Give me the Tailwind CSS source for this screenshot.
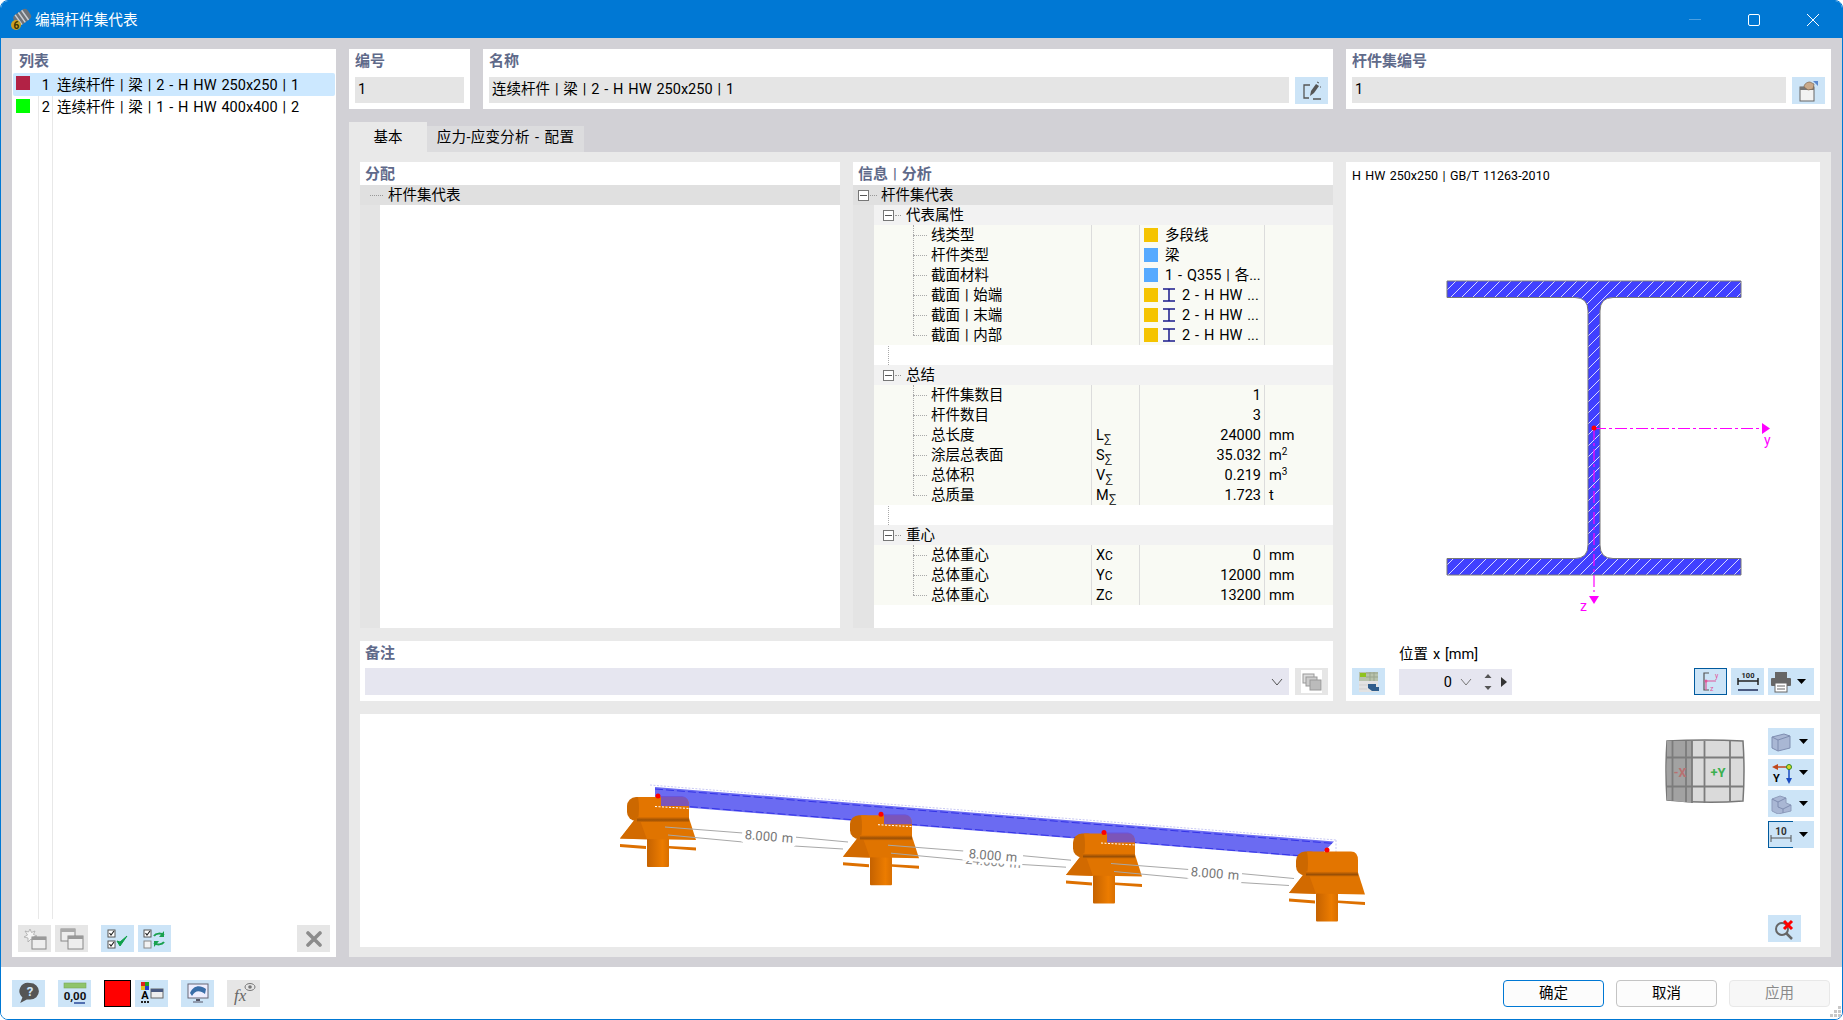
<!DOCTYPE html>
<html lang="zh"><head><meta charset="utf-8"><title>编辑杆件集代表</title>
<script src="https://cdn.jsdelivr.net/npm/@tailwindcss/browser@4"></script></head>
<body class="bg-white">
<div class="w-[1843px] h-[1020px] box-border flex flex-col border border-[#0078d4] rounded-lg overflow-hidden bg-white text-black text-[14.5px] leading-5 [word-spacing:1.3px] font-['Roboto','Noto_Sans_CJK_SC',sans-serif]">
 <!-- title bar -->
 <div class="h-[37px] shrink-0 bg-[#0078d4] flex items-center text-white pl-[8px] relative">
  <svg width="24" height="24" viewBox="0 0 24 24" class="mr-[2px]"><g transform="rotate(-35 12 10)"><rect x="5" y="4" width="17" height="12" rx="4" fill="#6d7278"/><path d="M9 4v12M13 4v12M17 4v12" stroke="#c9ced4" stroke-width="1.500"/></g><circle cx="7" cy="17" r="5" fill="#c9a227"/><text x="4.500" y="21" font-size="10" font-weight="700" fill="#3a3000">6</text></svg>
  <span class="text-[14.67px]">编辑杆件集代表</span>
  <div class="ml-auto flex items-center">
   <span class="w-[59px] flex justify-center"><span class="w-[12px] h-px bg-white/30"></span></span>
   <span class="w-[59px] flex justify-center"><span class="w-[12px] h-[12px] border border-white rounded-[2px]"></span></span>
   <span class="w-[59px] flex justify-center"><svg width="12" height="12" viewBox="0 0 12 12"><path d="M0 0L12 12M12 0L0 12" stroke="#fff" stroke-width="1"/></svg></span>
  </div>
 </div>
 <!-- main -->
 <div class="flex-1 min-h-0 bg-[#d2d1d6] flex gap-[13px] pt-[11px] pl-[11px] pr-[11px] pb-[10px]">
  <!-- list -->
  <div class="w-[324px] bg-white flex flex-col shrink-0">
   <div class="h-[24px] pl-[7px] pt-[2px] font-semibold text-[15px] text-[#5f6a8a]">列表</div>
   <div class="flex-1 relative px-px">
    <span class="absolute left-[26px] top-0 bottom-0 w-px bg-[#e8e8e8]"></span>
    <span class="absolute left-[40px] top-0 bottom-0 w-px bg-[#e8e8e8]"></span>
    <div class="relative h-[23px] bg-[#cce8ff] rounded-[2px] flex items-center pt-[2px]">
     <span class="w-[14px] h-[14px] bg-[#b22245] ml-[3px] -mt-[6px]"></span><span class="w-[20px] text-right">1</span><span class="ml-[7px]">连续杆件 | 梁 | 2 - H HW 250x250 | 1</span>
    </div>
    <div class="relative h-[23px] flex items-center pt-[1px]">
     <span class="w-[14px] h-[14px] bg-[#00ff00] ml-[3px] -mt-[5px]"></span><span class="w-[20px] text-right">2</span><span class="ml-[7px]">连续杆件 | 梁 | 1 - H HW 400x400 | 2</span>
    </div>
   </div>
   <div class="h-[38px] flex items-start pl-[6px] pr-[6px] pt-[6px] gap-[4px]">
    <span class="w-[33px] h-[27px] bg-[#e6e6e6] flex items-center justify-center"><svg width="24" height="22" viewBox="0 0 24 22"><path d="M7 1l1.500 3.500L12 3l-1.500 3.500L14 8l-3.500 1L12 13 8 11l-3 3 0-4-4-1 3.500-2L2 3l3.500 1z" fill="#f4f4f4" stroke="#aaa" stroke-width=".8"/><rect x="9" y="9" width="14" height="12" fill="#eee" stroke="#888"/><rect x="9" y="9" width="14" height="3" fill="#999"/></svg></span>
    <span class="w-[33px] h-[27px] bg-[#e6e6e6] flex items-center justify-center"><svg width="24" height="22" viewBox="0 0 24 22"><rect x="1" y="1" width="14" height="12" fill="#eee" stroke="#888"/><rect x="1" y="1" width="14" height="3" fill="#aaa"/><rect x="8" y="8" width="15" height="13" fill="#eee" stroke="#888"/><rect x="8" y="8" width="15" height="3" fill="#999"/></svg></span>
    <span class="w-[33px] h-[27px] bg-[#cce4f7] flex items-center justify-center ml-[9px]"><svg width="22" height="22" viewBox="0 0 22 22"><rect x="1" y="2" width="7" height="7" fill="#fff" stroke="#555"/><rect x="1" y="13" width="7" height="7" fill="#fff" stroke="#555"/><path d="M2.500 5l1.500 2 3-4M2.500 16l1.500 2 3-4" stroke="#222" fill="none" stroke-width="1.200"/><path d="M10 13l3 5 7-10-7 6z" fill="#0fa04a" stroke="#0fa04a"/></svg></span>
    <span class="w-[33px] h-[27px] bg-[#cce4f7] flex items-center justify-center"><svg width="24" height="22" viewBox="0 0 24 22"><rect x="1" y="2" width="7" height="7" fill="#fff" stroke="#555"/><rect x="1" y="13" width="7" height="7" fill="#f2f2f2" stroke="#888"/><path d="M2.500 5l1.500 2 3-4" stroke="#222" fill="none" stroke-width="1.200"/><path d="M11 8c2-3 7-3 10-1M21 14c-2 3-7 3-10 1" stroke="#1aa14e" stroke-width="2" fill="none"/><path d="M21 3v6h-5zM11 19v-6h5z" fill="#1aa14e"/></svg></span>
    <span class="ml-auto w-[33px] h-[27px] bg-[#e6e6e6] flex items-center justify-center"><svg width="16" height="16" viewBox="0 0 16 16"><path d="M2 2L14 14M14 2L2 14" stroke="#8c8c8c" stroke-width="3.600" stroke-linecap="round"/></svg></span>
   </div>
  </div>
  <!-- right -->
  <div class="flex-1 min-w-0 flex flex-col">
   <div class="h-[60px] flex gap-[13px] shrink-0">
    <div class="w-[121px] bg-white px-[6px] flex flex-col">
     <div class="h-[28px] pt-[2px] px-0 font-semibold text-[15px] text-[#5f6a8a]">编号</div>
     <div class="h-[26px] bg-[#e5e5e5] pl-[3px] flex items-center">1</div>
    </div>
    <div class="w-[850px] bg-white pl-[6px] pr-[5px] flex flex-col">
     <div class="h-[28px] pt-[2px] font-semibold text-[15px] text-[#5f6a8a]">名称</div>
     <div class="flex gap-[6px]">
      <div class="flex-1 h-[26px] bg-[#e5e5e5] pl-[3px] flex items-center">连续杆件 | 梁 | 2 - H HW 250x250 | 1</div>
      <span class="w-[33px] h-[27px] bg-[#cce4f7] flex items-center justify-center"><svg width="20" height="20" viewBox="0 0 20 20"><path d="M8 4H2v13h5M11 18h8" stroke="#555" stroke-width="1.300" fill="none"/><path d="M8 15l1-5 5-7 3 2-5 7z" fill="#555"/><path d="M15 1l2 1M18 6h1" stroke="#555"/></svg></span>
     </div>
    </div>
    <div class="flex-1 bg-white px-[6px] flex flex-col">
     <div class="h-[28px] pt-[2px] font-semibold text-[15px] text-[#5f6a8a]">杆件集编号</div>
     <div class="flex gap-[6px]">
      <div class="flex-1 h-[26px] bg-[#e5e5e5] pl-[3px] flex items-center">1</div>
      <span class="w-[33px] h-[27px] bg-[#cce4f7] flex items-center justify-center"><svg width="22" height="22" viewBox="0 0 22 22"><rect x="2" y="7" width="14" height="14" fill="#f2f2f2" stroke="#666"/><rect x="2" y="7" width="14" height="3" fill="#777"/><path d="M6 7c0-3 3-5 6-5l4 2-1 5-5 1z" fill="#c9a98a" stroke="#7d6650" stroke-width=".7"/><path d="M15 1h5v5z" fill="#5b8ad0"/></svg></span>
     </div>
    </div>
   </div>
   <!-- tabs -->
   <div class="mt-[13px] h-[30px] flex items-end shrink-0">
    <div class="w-[78px] h-[30px] bg-[#e9e9e9] flex items-center justify-center pt-[2px]">基本</div>
    <div class="w-[157px] h-[26px] bg-[#dcdcde] flex items-start justify-center pt-[2px] tracking-[.3px]">应力-应变分析 - 配置</div>
   </div>
   <!-- tab content -->
   <div class="flex-1 min-h-0 bg-[#e9e9e9] pt-[10px] px-[11px] pb-[10px] flex flex-col gap-[13px]">
    <div class="h-[539px] flex gap-[13px] shrink-0">
     <div class="w-[973px] flex flex-col gap-[13px]">
      <div class="h-[466px] flex gap-[13px]">
       <!-- assign -->
       <div class="w-[480px] bg-white flex flex-col">
        <div class="h-[23px] pl-[5px] pt-[2px] font-semibold text-[15px] text-[#5f6a8a]">分配</div>
        <div class="flex-1 flex flex-col relative">
         <div class="h-[20px] bg-[#e0e0e0] flex items-center pl-[10px]"><span class="w-[13px] border-t border-dotted border-[#999] mr-[5px]"></span><span class="mt-[2px]">杆件集代表</span></div>
         <div class="flex-1 flex"><div class="w-[20px] bg-[#e4e4e4]"></div><div class="flex-1 bg-white"></div></div>
        </div>
       </div>
       <!-- info -->
       <div class="w-[480px] bg-white flex flex-col">
        <div class="h-[23px] pl-[5px] pt-[2px] font-semibold text-[15px] text-[#5f6a8a]">信息 | 分析</div>
        <div class="flex-1 relative">
         <div class="h-[20px] bg-[#e0e0e0] flex items-center pl-[5px]">
          <span class="w-[11px] h-[11px] border border-[#777] bg-white flex items-center justify-center"><span class="w-[7px] h-px bg-[#555]"></span></span><span class="w-[7px] border-t border-dotted border-[#999] ml-[1px] mr-[4px]"></span><span class="mt-[2px]">杆件集代表</span></div>
         <div class="flex h-[423px]">
          <div class="w-[21px] bg-[#e4e4e4] shrink-0"></div>
          <div class="flex-1 relative">
           <span class="absolute left-[14px] top-0 h-[320px] border-l border-dotted border-[#aaa]"></span>
           <!-- group 1 -->
           <div class="h-[20px] bg-[#f2f2f2] flex items-center pl-[9px] relative"><span class="w-[11px] h-[11px] border border-[#777] bg-white flex items-center justify-center"><span class="w-[7px] h-px bg-[#555]"></span></span><span class="w-[6px] border-t border-dotted border-[#999] mx-[1px]"></span><span class="ml-[4px] mt-[2px]">代表属性</span></div>
           <div class="relative">
            <span class="absolute left-[39px] top-0 h-[110px] border-l border-dotted border-[#aaa] z-10"></span>
            <div class="h-[20px] bg-[#f9faf4] flex"><div class="w-[218px] flex items-center pl-[39px] border-r border-[#dcdcdc]"><span class="w-[14px] border-t border-dotted border-[#aaa] mr-[4px]"></span><span class="mt-[2px]">线类型</span></div><div class="w-[48px] border-r border-[#dcdcdc]"></div><div class="w-[125px] border-r border-[#dcdcdc] flex items-center pl-[4px]"><span class="w-[14px] h-[14px] bg-[#f5c400]"></span><span class="ml-[7px] mt-[2px]">多段线</span></div></div>
            <div class="h-[20px] bg-[#f9faf4] flex"><div class="w-[218px] flex items-center pl-[39px] border-r border-[#dcdcdc]"><span class="w-[14px] border-t border-dotted border-[#aaa] mr-[4px]"></span><span class="mt-[2px]">杆件类型</span></div><div class="w-[48px] border-r border-[#dcdcdc]"></div><div class="w-[125px] border-r border-[#dcdcdc] flex items-center pl-[4px]"><span class="w-[14px] h-[14px] bg-[#55aaff]"></span><span class="ml-[7px] mt-[2px]">梁</span></div></div>
            <div class="h-[20px] bg-[#f9faf4] flex"><div class="w-[218px] flex items-center pl-[39px] border-r border-[#dcdcdc]"><span class="w-[14px] border-t border-dotted border-[#aaa] mr-[4px]"></span><span class="mt-[2px]">截面材料</span></div><div class="w-[48px] border-r border-[#dcdcdc]"></div><div class="w-[125px] border-r border-[#dcdcdc] flex items-center pl-[4px]"><span class="w-[14px] h-[14px] bg-[#55aaff]"></span><span class="ml-[7px] mt-[2px] whitespace-nowrap">1 - Q355 | 各...</span></div></div>
            <div class="h-[20px] bg-[#f9faf4] flex"><div class="w-[218px] flex items-center pl-[39px] border-r border-[#dcdcdc]"><span class="w-[14px] border-t border-dotted border-[#aaa] mr-[4px]"></span><span class="mt-[2px]">截面 | 始端</span></div><div class="w-[48px] border-r border-[#dcdcdc]"></div><div class="w-[125px] border-r border-[#dcdcdc] flex items-center pl-[4px]"><span class="w-[14px] h-[14px] bg-[#f5c400]"></span><svg width="12" height="14" viewBox="0 0 12 14" class="ml-[5px]"><path d="M0 1h12M0 13h12M6 1v12" stroke="#1a1a8c" stroke-width="1.500"/></svg><span class="ml-[7px] mt-[2px] whitespace-nowrap">2 - H HW ...</span></div></div>
            <div class="h-[20px] bg-[#f9faf4] flex"><div class="w-[218px] flex items-center pl-[39px] border-r border-[#dcdcdc]"><span class="w-[14px] border-t border-dotted border-[#aaa] mr-[4px]"></span><span class="mt-[2px]">截面 | 末端</span></div><div class="w-[48px] border-r border-[#dcdcdc]"></div><div class="w-[125px] border-r border-[#dcdcdc] flex items-center pl-[4px]"><span class="w-[14px] h-[14px] bg-[#f5c400]"></span><svg width="12" height="14" viewBox="0 0 12 14" class="ml-[5px]"><path d="M0 1h12M0 13h12M6 1v12" stroke="#1a1a8c" stroke-width="1.500"/></svg><span class="ml-[7px] mt-[2px] whitespace-nowrap">2 - H HW ...</span></div></div>
            <div class="h-[20px] bg-[#f9faf4] flex"><div class="w-[218px] flex items-center pl-[39px] border-r border-[#dcdcdc]"><span class="w-[14px] border-t border-dotted border-[#aaa] mr-[4px]"></span><span class="mt-[2px]">截面 | 内部</span></div><div class="w-[48px] border-r border-[#dcdcdc]"></div><div class="w-[125px] border-r border-[#dcdcdc] flex items-center pl-[4px]"><span class="w-[14px] h-[14px] bg-[#f5c400]"></span><svg width="12" height="14" viewBox="0 0 12 14" class="ml-[5px]"><path d="M0 1h12M0 13h12M6 1v12" stroke="#1a1a8c" stroke-width="1.500"/></svg><span class="ml-[7px] mt-[2px] whitespace-nowrap">2 - H HW ...</span></div></div>
           </div>
           <div class="h-[20px]"></div>
           <!-- group 2 -->
           <div class="h-[20px] bg-[#f2f2f2] flex items-center pl-[9px] relative"><span class="w-[11px] h-[11px] border border-[#777] bg-white flex items-center justify-center"><span class="w-[7px] h-px bg-[#555]"></span></span><span class="w-[6px] border-t border-dotted border-[#999] mx-[1px]"></span><span class="ml-[4px] mt-[2px]">总结</span></div>
           <div class="relative">
            <span class="absolute left-[39px] top-0 h-[110px] border-l border-dotted border-[#aaa] z-10"></span>
            <div class="h-[20px] bg-[#f9faf4] flex"><div class="w-[218px] flex items-center pl-[39px] border-r border-[#dcdcdc]"><span class="w-[14px] border-t border-dotted border-[#aaa] mr-[4px]"></span><span class="mt-[2px]">杆件集数目</span></div><div class="w-[48px] border-r border-[#dcdcdc] pl-[4px]"></div><div class="w-[125px] border-r border-[#dcdcdc] text-right pr-[3px] pt-px">1</div></div>
            <div class="h-[20px] bg-[#f9faf4] flex"><div class="w-[218px] flex items-center pl-[39px] border-r border-[#dcdcdc]"><span class="w-[14px] border-t border-dotted border-[#aaa] mr-[4px]"></span><span class="mt-[2px]">杆件数目</span></div><div class="w-[48px] border-r border-[#dcdcdc] pl-[4px]"></div><div class="w-[125px] border-r border-[#dcdcdc] text-right pr-[3px] pt-px">3</div></div>
            <div class="h-[20px] bg-[#f9faf4] flex"><div class="w-[218px] flex items-center pl-[39px] border-r border-[#dcdcdc]"><span class="w-[14px] border-t border-dotted border-[#aaa] mr-[4px]"></span><span class="mt-[2px]">总长度</span></div><div class="w-[48px] border-r border-[#dcdcdc] pl-[4px] pt-px">L<sub class="text-[12px] leading-none -bottom-[3px]">∑</sub></div><div class="w-[125px] border-r border-[#dcdcdc] text-right pr-[3px] pt-px">24000</div><div class="pl-[4px] pt-px">mm</div></div>
            <div class="h-[20px] bg-[#f9faf4] flex"><div class="w-[218px] flex items-center pl-[39px] border-r border-[#dcdcdc]"><span class="w-[14px] border-t border-dotted border-[#aaa] mr-[4px]"></span><span class="mt-[2px]">涂层总表面</span></div><div class="w-[48px] border-r border-[#dcdcdc] pl-[4px] pt-px">S<sub class="text-[12px] leading-none -bottom-[3px]">∑</sub></div><div class="w-[125px] border-r border-[#dcdcdc] text-right pr-[3px] pt-px">35.032</div><div class="pl-[4px] pt-px">m<sup class="text-[10px] leading-none">2</sup></div></div>
            <div class="h-[20px] bg-[#f9faf4] flex"><div class="w-[218px] flex items-center pl-[39px] border-r border-[#dcdcdc]"><span class="w-[14px] border-t border-dotted border-[#aaa] mr-[4px]"></span><span class="mt-[2px]">总体积</span></div><div class="w-[48px] border-r border-[#dcdcdc] pl-[4px] pt-px">V<sub class="text-[12px] leading-none -bottom-[3px]">∑</sub></div><div class="w-[125px] border-r border-[#dcdcdc] text-right pr-[3px] pt-px">0.219</div><div class="pl-[4px] pt-px">m<sup class="text-[10px] leading-none">3</sup></div></div>
            <div class="h-[20px] bg-[#f9faf4] flex"><div class="w-[218px] flex items-center pl-[39px] border-r border-[#dcdcdc]"><span class="w-[14px] border-t border-dotted border-[#aaa] mr-[4px]"></span><span class="mt-[2px]">总质量</span></div><div class="w-[48px] border-r border-[#dcdcdc] pl-[4px] pt-px">M<sub class="text-[12px] leading-none -bottom-[3px]">∑</sub></div><div class="w-[125px] border-r border-[#dcdcdc] text-right pr-[3px] pt-px">1.723</div><div class="pl-[4px] pt-px">t</div></div>
           </div>
           <div class="h-[20px]"></div>
           <!-- group 3 -->
           <div class="h-[20px] bg-[#f2f2f2] flex items-center pl-[9px] relative"><span class="w-[11px] h-[11px] border border-[#777] bg-white flex items-center justify-center"><span class="w-[7px] h-px bg-[#555]"></span></span><span class="w-[6px] border-t border-dotted border-[#999] mx-[1px]"></span><span class="ml-[4px] mt-[2px]">重心</span></div>
           <div class="relative">
            <span class="absolute left-[39px] top-0 h-[50px] border-l border-dotted border-[#aaa] z-10"></span>
            <div class="h-[20px] bg-[#f9faf4] flex"><div class="w-[218px] flex items-center pl-[39px] border-r border-[#dcdcdc]"><span class="w-[14px] border-t border-dotted border-[#aaa] mr-[4px]"></span><span class="mt-[2px]">总体重心</span></div><div class="w-[48px] border-r border-[#dcdcdc] pl-[4px] pt-px">X<span class="text-[12px]">C</span></div><div class="w-[125px] border-r border-[#dcdcdc] text-right pr-[3px] pt-px">0</div><div class="pl-[4px] pt-px">mm</div></div>
            <div class="h-[20px] bg-[#f9faf4] flex"><div class="w-[218px] flex items-center pl-[39px] border-r border-[#dcdcdc]"><span class="w-[14px] border-t border-dotted border-[#aaa] mr-[4px]"></span><span class="mt-[2px]">总体重心</span></div><div class="w-[48px] border-r border-[#dcdcdc] pl-[4px] pt-px">Y<span class="text-[12px]">C</span></div><div class="w-[125px] border-r border-[#dcdcdc] text-right pr-[3px] pt-px">12000</div><div class="pl-[4px] pt-px">mm</div></div>
            <div class="h-[20px] bg-[#f9faf4] flex"><div class="w-[218px] flex items-center pl-[39px] border-r border-[#dcdcdc]"><span class="w-[14px] border-t border-dotted border-[#aaa] mr-[4px]"></span><span class="mt-[2px]">总体重心</span></div><div class="w-[48px] border-r border-[#dcdcdc] pl-[4px] pt-px">Z<span class="text-[12px]">C</span></div><div class="w-[125px] border-r border-[#dcdcdc] text-right pr-[3px] pt-px">13200</div><div class="pl-[4px] pt-px">mm</div></div>
           </div>
          </div>
         </div>
        </div>
       </div>
      </div>
      <!-- note -->
      <div class="h-[60px] bg-white flex flex-col px-[5px]">
       <div class="h-[27px] pt-[2px] font-semibold text-[15px] text-[#5f6a8a]">备注</div>
       <div class="flex gap-[6px]">
        <div class="flex-1 h-[27px] bg-[#e6e6f0] flex items-center justify-end pr-[6px]"><svg width="12" height="8" viewBox="0 0 12 8"><path d="M1 1l5 6 5-6" stroke="#555" fill="none"/></svg></div>
        <span class="w-[33px] h-[27px] bg-[#e6e6e6] flex items-center justify-center"><span class="w-[21px] h-[23px] bg-white flex items-center justify-center"><svg width="20" height="18" viewBox="0 0 20 18"><rect x="1" y="1" width="11" height="9" fill="#ddd" stroke="#999"/><rect x="4" y="4" width="11" height="9" fill="#ccc" stroke="#999"/><rect x="8" y="7" width="11" height="10" fill="#bbb" stroke="#999"/></svg></span></span>
       </div>
      </div>
     </div>
     <!-- section panel -->
     <div class="flex-1 bg-white flex flex-col px-[6px] relative">
      <div class="h-[23px] pt-[4px] text-[12.5px] whitespace-nowrap">H HW 250x250 | GB/T 11263-2010</div>
      <svg class="-mx-[6px] shrink-0" width="474" height="455" viewBox="1346 185 474 455">
       <defs><pattern id="h" width="11" height="11" patternUnits="userSpaceOnUse" patternTransform="translate(1446 280)"><path d="M-1 12L12 -1" stroke="#d8d8ff" stroke-width="1"/></pattern>
       <path id="sec" d="M1447 281H1741V297.500H1613Q1600 297.500 1600 311V545Q1600 558.500 1613 558.500H1741V575H1447V558.500H1575Q1588 558.500 1588 545V311Q1588 297.500 1575 297.500H1447Z"/></defs>
       <use href="#sec" fill="#4040ff"/><use href="#sec" fill="url(#h)" stroke="#777" stroke-width="1"/>
       <path d="M1594 428.500H1762" stroke="#ff00ff" stroke-width="1.200" stroke-dasharray="12 3 3 3"/>
       <path d="M1594 428V592" stroke="#ff00ff" stroke-width="1.200" stroke-dasharray="12 3 3 3"/>
       <path d="M1762 423l8 5.500-8 5.500zM1589 596h10l-5 8z" fill="#ff00ff"/>
       <circle cx="1594" cy="428" r="2.500" fill="#ff0000"/>
       <text x="1764" y="445" font-size="14" fill="#ff00ff">y</text><text x="1580" y="611" font-size="14" fill="#ff00ff">z</text>
      </svg>
      <div class="absolute left-[53px] top-[483px] leading-5">位置 x [mm]</div>
      <div class="absolute left-[6px] right-[6px] top-[506px] flex items-start">
       <span class="w-[33px] h-[27px] bg-[#cce4f7] flex items-center justify-center"><svg width="22" height="22" viewBox="0 0 22 22"><rect x="1" y="1" width="19" height="9" fill="#b7c2ab"/><rect x="2" y="2" width="6" height="4" fill="#8fc31f"/><path d="M8 2h12M8 6h12M12 1v9M16 1v9" stroke="#9aa58f"/><rect x="1" y="10" width="19" height="11" fill="#e2e2e2"/><path d="M1 14h9M1 18h8" stroke="#cfcfcf"/><path d="M10 13h8v3h3v4h-7l-4-3z" fill="#2f5d8c"/></svg></span>
       <div class="ml-[14px] w-[113px] h-[26px] mt-px bg-[#e6e6f0] flex items-center relative">
        <span class="absolute right-[60px] top-[4px]">0</span>
        <svg class="absolute right-[40px]" width="12" height="8" viewBox="0 0 12 8"><path d="M1 1l5 6 5-6" stroke="#777" fill="none"/></svg>
        <svg class="absolute right-[20px]" width="8" height="18" viewBox="0 0 8 18"><path d="M4 1l3.500 4h-7zM4 17L.500 13h7z" fill="#555"/></svg>
        <svg class="absolute right-[5px]" width="6" height="10" viewBox="0 0 6 10"><path d="M0 0l6 5-6 5z" fill="#333"/></svg>
       </div>
       <div class="ml-auto flex gap-[4px]">
        <span class="w-[33px] h-[27px] bg-[#cce4f7] border border-[#005a9e] flex items-center justify-center"><svg width="22" height="22" viewBox="0 0 22 22"><path d="M9 2H4v17h5" stroke="#555" fill="none" stroke-width="1.200"/><path d="M5 10h11M6 10v9" stroke="#e0559a" stroke-width="1.200"/><circle cx="6" cy="10" r="1.500" fill="#e0559a"/><text x="15" y="7" font-size="7" fill="#e0559a">y</text><text x="10" y="20" font-size="7" fill="#e0559a">z</text></svg></span>
        <span class="w-[33px] h-[27px] bg-[#cce4f7] flex items-center justify-center"><svg width="24" height="22" viewBox="0 0 24 22"><text x="12" y="7" text-anchor="middle" font-size="7.500" font-weight="700" fill="#222">100</text><path d="M2 10h20M2 7v7M22 7v7" stroke="#222" stroke-width="1.500"/><rect x="2" y="18" width="20" height="2" fill="#4a5a80"/></svg></span>
        <span class="w-[46px] h-[27px] bg-[#cce4f7] flex items-center pl-[2px]"><svg width="22" height="22" viewBox="0 0 22 22"><rect x="5" y="1" width="12" height="6" fill="#666"/><rect x="1" y="7" width="20" height="8" rx="1" fill="#666"/><rect x="5" y="12" width="12" height="9" fill="#fff" stroke="#666"/><path d="M7 15h8M7 18h8" stroke="#666"/></svg><svg class="ml-[5px]" width="9" height="5" viewBox="0 0 9 5"><path d="M0 0h9L4.500 5z" fill="#000"/></svg></span>
       </div>
      </div>
     </div>
    </div>
    <!-- 3D view -->
    <div class="h-[233px] bg-white relative shrink-0">
     <svg class="block" width="1460" height="233" viewBox="360 714 1460 233">
      <defs>
       <linearGradient id="col" x1="0" x2="1" y1="0" y2="0"><stop offset="0" stop-color="#c56200"/><stop offset=".7" stop-color="#ec7c00"/><stop offset="1" stop-color="#d96f00"/></linearGradient>
       <linearGradient id="band" x1="0" x2="0" y1="0" y2="1"><stop offset="0" stop-color="#e07200"/><stop offset=".6" stop-color="#9a5006"/><stop offset="1" stop-color="#d06a00"/></linearGradient>
       <g id="sup">
        <path d="M620 844l26 2v3l-26-2zM669 846l27 1.500v3l-27-2z" fill="#dd7000"/>
        <rect x="647" y="838" width="22" height="29" rx="1" fill="url(#col)"/>
        <path d="M636 818L620 838.500 696 840 689 818z" fill="#e07400"/>
        <path d="M636 818L620 838.500 647 839.500 640 820z" fill="#d26a00"/>
        <rect x="627" y="797" width="24" height="24" rx="9" fill="#cc6800"/>
        <path d="M638 797H682Q689 797 689 806V820H638Q640 808 638 797z" fill="#e37500"/>
        <rect x="637" y="817" width="52" height="5" fill="url(#band)"/>
       </g>
       <g id="ov"><path d="M661 796H682Q689 797 689 806H661z" fill="#6a50d8" fill-opacity=".85"/><path d="M655 806.500L690 808.500" stroke="#fff" stroke-dasharray="2 1.500"/><circle cx="658" cy="796" r="2.500" fill="#ff0000"/></g>
       <g id="dim" stroke="#a8a8a8" stroke-width="1"><path d="M665 827L743 833M668 835L743 842M794 837L848 842M794 846L843 849"/></g>
      </defs>
      <path d="M650 785L1336 840M1336 840V857" stroke="#c9c9f5" stroke-dasharray="2 1.500" fill="none"/>
      <path d="M655 787L1334 841.500 1318 858 655 805z" fill="#6b6bf2"/>
      <path d="M655 789L1334 843.500M657 804L1316 857" stroke="#3434e8" stroke-dasharray="8 3" stroke-width="1"/>
      <use href="#sup"/><use href="#sup" transform="translate(223 18.200)"/><use href="#sup" transform="translate(446 36.500)"/><use href="#sup" transform="translate(669 54.500)"/>
      <use href="#ov"/><use href="#ov" transform="translate(223 18.200)"/><use href="#ov" transform="translate(446 36.500)"/>
      <circle cx="1327" cy="850" r="2.500" fill="#ff0000"/>
      <use href="#dim"/><use href="#dim" transform="translate(223 18.200)"/><use href="#dim" transform="translate(446 36.500)"/>
      <text x="993" y="866" font-size="13" fill="#8a8a8a" text-anchor="middle" transform="rotate(4.600 993 864)">24.000 m</text>
      <g font-size="13" fill="#777" text-anchor="middle">
       <g transform="translate(769 836) rotate(4.600)"><rect x="-27" y="-8" width="54" height="16" fill="#fff"/><text y="5">8.000 m</text></g>
       <g transform="translate(993 855) rotate(4.600)"><rect x="-30" y="-9" width="60" height="17" fill="#fff"/><text y="5">8.000 m</text></g>
       <g transform="translate(1215 873) rotate(4.600)"><rect x="-27" y="-8" width="54" height="16" fill="#fff"/><text y="5">8.000 m</text></g>
      </g>
      <!-- cube -->
      <path d="M1667 741Q1705 739 1743 741 1745 771 1743 801 1705 804 1667 800 1665 771 1667 741z" fill="#dadada" stroke="#777" stroke-width="1.500"/>
      <path d="M1667 741L1692 741V803L1667 800z" fill="#a2a2a2"/>
      <path d="M1672.500 741V801M1686 741V802M1692 741V803M1704.500 741V803M1730 741V802M1667 757.500H1743M1667 786.500H1743" stroke="#7c7c7c" stroke-width="1.800"/>
      <text x="1680" y="777" font-size="12" font-weight="700" fill="#b87070" text-anchor="middle">-X</text>
      <text x="1718" y="777" font-size="13" font-weight="700" fill="#3cb050" text-anchor="middle">+Y</text>
     </svg>
     <div class="absolute right-[6px] top-[14px] flex flex-col gap-[4px]">
      <span class="w-[46px] h-[27px] bg-[#cce4f7] flex items-center pl-[2px]"><svg width="22" height="20" viewBox="0 0 22 20"><path d="M2 5l12-3 6 2v12l-12 3-6-3z" fill="#a9b7d4" stroke="#7f8db0"/><path d="M2 5l6 3v11M8 8l12-4" stroke="#7f8db0" fill="none"/></svg><svg class="ml-[7px]" width="9" height="5" viewBox="0 0 9 5"><path d="M0 0h9L4.500 5z" fill="#000"/></svg></span>
      <span class="w-[46px] h-[27px] bg-[#cce4f7] flex items-center pl-[2px]"><svg width="24" height="24" viewBox="0 0 24 24"><path d="M19 6H5" stroke="#c0481c" stroke-width="1.500"/><path d="M2 6l6-3v6z" fill="#c0481c"/><path d="M19 6v14" stroke="#1a4bc0" stroke-width="1.500"/><path d="M16 17h6l-3 6z" fill="#1a4bc0"/><circle cx="19" cy="6" r="2.500" fill="#d8d820" stroke="#2a8a2a"/><text x="3" y="21" font-size="11" font-weight="700">Y</text></svg><svg class="ml-[5px]" width="9" height="5" viewBox="0 0 9 5"><path d="M0 0h9L4.500 5z" fill="#000"/></svg></span>
      <span class="w-[46px] h-[27px] bg-[#cce4f7] flex items-center pl-[2px]"><svg width="22" height="20" viewBox="0 0 22 20"><path d="M2 5l8-3 6 2v5l5 2v6l-13 3-6-3z" fill="#a9b7d4" stroke="#8f9dbc"/><path d="M2 5l6 3v5l5 2v4M8 8l8-4M13 15l8-4" stroke="#7f8db0" fill="none"/></svg><svg class="ml-[7px]" width="9" height="5" viewBox="0 0 9 5"><path d="M0 0h9L4.500 5z" fill="#000"/></svg></span>
      <span class="w-[46px] h-[27px] bg-[#cce4f7] flex items-center relative"><span class="absolute left-0 top-0 w-[25px] h-[27px] border-l border-t border-b border-[#005a9e]"></span><svg class="ml-[2px]" width="22" height="20" viewBox="0 0 22 20"><text x="11" y="10" text-anchor="middle" font-size="10" font-weight="700" fill="#333">10</text><path d="M1 13h20M1 10v7M21 10v7" stroke="#555"/></svg><svg class="ml-[7px]" width="9" height="5" viewBox="0 0 9 5"><path d="M0 0h9L4.500 5z" fill="#000"/></svg></span>
     </div>
     <span class="absolute left-[1408px] top-[201px] w-[33px] h-[27px] bg-[#cce4f7] flex items-center justify-center"><svg width="22" height="22" viewBox="0 0 22 22"><circle cx="8" cy="11" r="6" fill="none" stroke="#666" stroke-width="2"/><path d="M12 15l6 6" stroke="#666" stroke-width="2.500"/><path d="M10 3l8 8M18 3l-8 8" stroke="#ff0000" stroke-width="3"/></svg></span>
    </div>
   </div>
  </div>
 </div>
 <!-- footer -->
 <div class="h-[52px] shrink-0 bg-white flex items-center pl-[11px] pr-[12px] relative">
  <span class="w-[33px] h-[27px] bg-[#cce4f7] flex items-center justify-center"><svg width="22" height="22" viewBox="0 0 20 20"><path d="M11 1a8 7.500 0 0 1 0 15H8l-6 3 2-5a8 7.500 0 0 1 7-13z" fill="#555"/><text x="11" y="13" text-anchor="middle" font-size="12" font-weight="700" fill="#cce4f7">?</text></svg></span>
  <span class="ml-[13px] w-[33px] h-[27px] bg-[#cce4f7] flex items-center justify-center"><svg width="26" height="24" viewBox="0 0 26 24"><rect x="2" y="2" width="22" height="5" fill="#8fc46a" stroke="#7aa858" stroke-width=".6"/><text x="13" y="19" text-anchor="middle" font-size="11.500" font-weight="700" fill="#111">0,00</text><path d="M12 22h11" stroke="#2a4a9a" stroke-width="1.500"/></svg></span>
  <span class="ml-[13px] w-[27px] h-[27px] bg-[#ff0000] border border-black"></span>
  <span class="ml-[4px] w-[33px] h-[27px] bg-[#cce4f7] flex items-center justify-center"><svg width="24" height="24" viewBox="0 0 24 24"><rect x="1" y="1" width="4" height="4" fill="#e02020"/><rect x="5" y="1" width="4" height="4" fill="#20a020"/><rect x="1" y="5" width="4" height="4" fill="#e0c020"/><rect x="5" y="5" width="4" height="4" fill="#2040d0"/><text x="5" y="18" text-anchor="middle" font-size="11" font-weight="700">A</text><path d="M1 21h8" stroke="#222" stroke-width="2" stroke-dasharray="2 1"/><rect x="11" y="8" width="12" height="9" fill="#eee" stroke="#666"/><rect x="11" y="8" width="12" height="3" fill="#4a5a80"/></svg></span>
  <span class="ml-[13px] w-[33px] h-[27px] bg-[#cce4f7] flex items-center justify-center"><svg width="24" height="24" viewBox="0 0 24 24"><rect x="2" y="3" width="20" height="14" fill="#eef" stroke="#667"/><path d="M4 12C8 4 14 4 20 8L19 13C14 9 9 9 6 15z" fill="#3a6ea8"/><rect x="10" y="18" width="4" height="2" fill="#556"/><path d="M7 21h10" stroke="#556"/></svg></span>
  <span class="ml-[13px] w-[33px] h-[27px] bg-[#e6e6e6] flex items-center justify-center"><svg width="26" height="24" viewBox="0 0 26 24"><text x="3" y="20" font-family="Liberation Serif" font-style="italic" font-size="17" fill="#666">fx</text><ellipse cx="19" cy="6" rx="5" ry="3.500" fill="none" stroke="#777"/><circle cx="19" cy="6" r="1.800" fill="#777"/></svg></span>
  <div class="ml-auto flex gap-[12px]">
   <span class="w-[101px] h-[27px] rounded-[4px] border border-[#0078d4] bg-[#fcfcfc] flex items-center justify-center pt-[2px]">确定</span>
   <span class="w-[101px] h-[27px] rounded-[4px] border border-[#c4c4c4] bg-[#fcfcfc] flex items-center justify-center pt-[2px]">取消</span>
   <span class="w-[101px] h-[27px] rounded-[4px] border border-[#e8e8e8] bg-[#f7f7f7] text-[#8a8a8a] flex items-center justify-center pt-[2px]">应用</span>
  </div>
  <svg class="absolute right-[1px] bottom-[1px]" width="12" height="12" viewBox="0 0 12 12"><path d="M9 0h3v3H9zM5 4h3v3H5zM9 4h3v3H9zM1 8h3v3H1zM5 8h3v3H5zM9 8h3v3H9z" fill="#c8c8c8"/></svg>
 </div>
</div>
</body></html>
